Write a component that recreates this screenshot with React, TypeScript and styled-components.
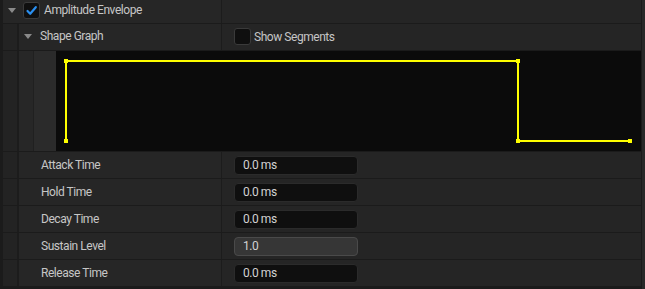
import React from "react";
import styled, { createGlobalStyle } from "styled-components";

const Global = createGlobalStyle`
  html, body { margin: 0; padding: 0; background: #1b1b1b; }
  body { font-family: Roboto, "Noto Sans", "Liberation Sans", sans-serif; font-size: 12px; color: #c4c4c4; }
  * { box-sizing: border-box; }
`;

const Page = styled.div`
  display: flex;
  width: 645px;
  height: 289px;
  background: #1b1b1b;
`;

const LeftGutter = styled.div`
  width: 3px;
  flex: none;
`;

const Main = styled.div`
  flex: 1;
  display: flex;
  flex-direction: column;
`;

const RightBar = styled.div`
  width: 4px;
  flex: none;
  border-left: 1px solid #1a1a1a;
  background: #282828;
`;

const Row = styled.div<{ $h: number }>`
  display: flex;
  height: ${(p) => p.$h + 1}px;
  border-bottom: 1px solid #1b1b1b;
  flex: none;
`;

const Indent = styled.div`
  width: 16px;
  flex: none;
  background: #232323;
  border-right: 2px solid #1c1c1c;
`;

const NameCell = styled.div<{ $w: number; $pl: number; $pb?: number }>`
  width: ${(p) => p.$w}px;
  flex: none;
  display: flex;
  align-items: center;
  padding-left: ${(p) => p.$pl}px;
  padding-bottom: ${(p) => p.$pb ?? 0}px;
  background: #262626;
  border-right: 1px solid #1c1c1c;
`;

const ValueCell = styled.div<{ $pb?: number }>`
  flex: 1;
  display: flex;
  align-items: center;
  padding-left: 12px;
  padding-bottom: ${(p) => p.$pb ?? 0}px;
  background: #252525;
`;

const Label = styled.span`
  color: #c6c6c6;
  font-size: 12px;
  line-height: 14px;
  letter-spacing: -0.45px;
  white-space: nowrap;
`;

const Arrow = styled.span<{ $mr: number }>`
  width: 0;
  height: 0;
  border-left: 4.5px solid transparent;
  border-right: 4.5px solid transparent;
  border-top: 5px solid #8a8a8a;
  margin-right: ${(p) => p.$mr}px;
  flex: none;
`;

const Box = styled.span<{ $mr: number }>`
  width: 17px;
  height: 17px;
  flex: none;
  border-radius: 3px;
  background: #0f0f0f;
  border: 1px solid #3a3a3a;
  margin-right: ${(p) => p.$mr}px;
  display: flex;
  align-items: center;
  justify-content: center;
`;

const GraphIndentA = styled.div`
  width: 15px;
  flex: none;
  background: #272727;
  border-right: 1px solid #202020;
`;

const GraphIndentB = styled.div`
  width: 22px;
  flex: none;
  background: #2b2b2b;
`;

const GraphCanvas = styled.div`
  flex: 1;
  background: #0b0b0b;
  display: flex;
`;

const Field = styled.div<{ $light?: boolean }>`
  width: 124px;
  height: 19px;
  border-radius: 4px;
  border: 1px solid ${(p) => (p.$light ? "#4a4a4a" : "#2b2b2b")};
  background: ${(p) => (p.$light ? "#363636" : "#0f0f0f")};
  color: #d2d2d2;
  font-size: 12px;
  line-height: 17px;
  letter-spacing: -0.45px;
  padding-left: 8px;
  white-space: nowrap;
`;

const Check = () => (
  <svg width="15" height="15" viewBox="0 0 15 15">
    <path d="M3.5 8 L6.2 10.8 L11.8 4.2" fill="none" stroke="#2a8ff0" strokeWidth="2.2" strokeLinecap="round" strokeLinejoin="round" />
  </svg>
);

const pts: [number, number][] = [
  [10, 10],
  [10, 90],
  [462, 10],
  [462, 90],
  [574, 90],
];

const Graph = () => (
  <svg width="584" height="100" viewBox="0 0 584 100">
    <polyline points="10,90 10,10 462,10 462,90 574,90" fill="none" stroke="#ffff00" strokeWidth="2" />
    {pts.map(([x, y], i) => (
      <rect key={i} x={x - 2} y={y - 2} width="4" height="4" fill="#ffff00" />
    ))}
  </svg>
);

const params = [
  { name: "Attack Time", value: "0.0 ms" },
  { name: "Hold Time", value: "0.0 ms" },
  { name: "Decay Time", value: "0.0 ms" },
  { name: "Sustain Level", value: "1.0", light: true },
  { name: "Release Time", value: "0.0 ms" },
];

export default function App() {
  return (
    <>
      <Global />
      <Page>
        <LeftGutter />
        <Main>
          <Row $h={23}>
            <NameCell $w={219} $pl={5} $pb={3}>
              <Arrow $mr={7} />
              <Box $mr={4}>
                <Check />
              </Box>
              <Label>Amplitude Envelope</Label>
            </NameCell>
            <ValueCell />
          </Row>
          <Row $h={26}>
            <Indent />
            <NameCell $w={203} $pl={5} $pb={2}>
              <Arrow $mr={8} />
              <Label>Shape Graph</Label>
            </NameCell>
            <ValueCell $pb={1}>
              <Box $mr={3} />
              <Label>Show Segments</Label>
            </ValueCell>
          </Row>
          <Row $h={100}>
            <Indent />
            <GraphIndentA />
            <GraphIndentB />
            <GraphCanvas>
              <Graph />
            </GraphCanvas>
          </Row>
          {params.map((p) => (
            <Row $h={26} key={p.name}>
              <Indent />
              <NameCell $w={203} $pl={22}>
                <Label>{p.name}</Label>
              </NameCell>
              <ValueCell>
                <Field $light={p.light}>{p.value}</Field>
              </ValueCell>
            </Row>
          ))}
        </Main>
        <RightBar />
      </Page>
    </>
  );
}
